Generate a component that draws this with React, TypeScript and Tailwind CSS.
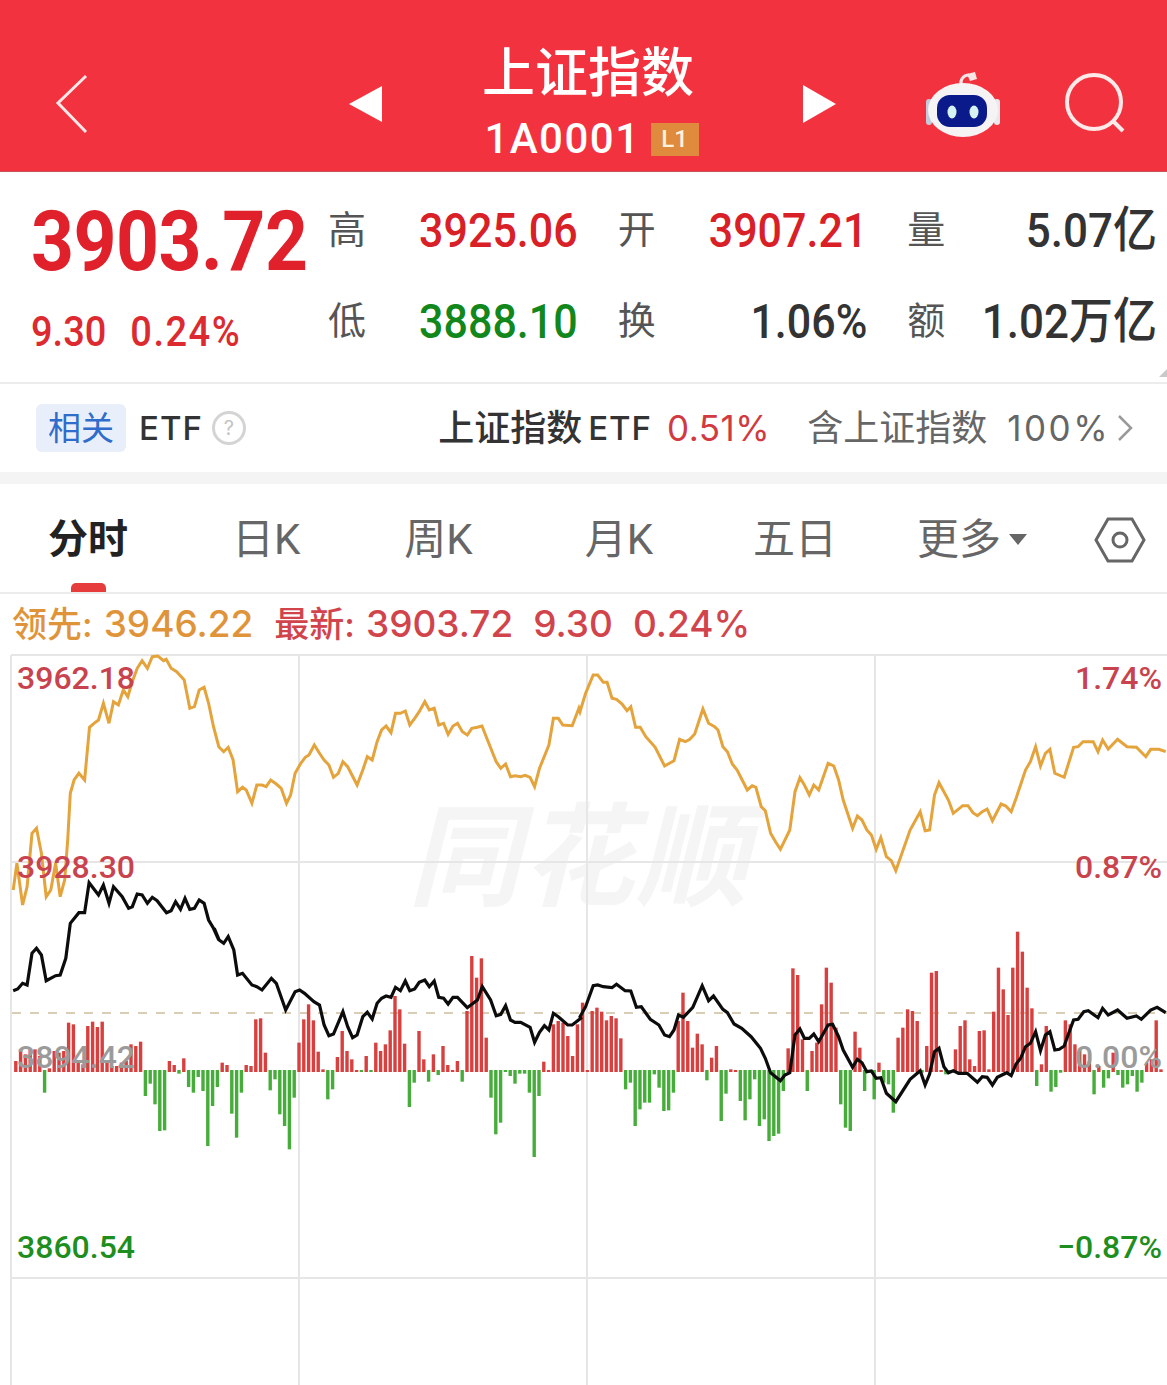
const orangeA = [35,750,45,670,60,795,72,740,85,580,97,565,110,640,123,770,135,750,148,670,160,770,172,720,180,600,187,460,197,420,210,400,225,420,238,262,250,250,262,240,275,190,290,250,302,185,315,195,328,150,340,170,352,125,365,85,378,62,392,85,405,50,420,48,435,62,442,58,455,85,470,95,490,120,505,205,517,200,530,150,543,142,555,190,568,260,582,320,595,335,607,322,620,360,632,455,645,442,655,450,670,490,683,435,697,435,708,440,720,420,735,432,748,445,762,490,773,465,785,400,800,370,812,352,822,345,836,315,850,340,862,360,875,375,887,412,900,400,912,365,925,380,950,435,965,390,977,350,990,360,1003,305,1015,270,1027,258,1040,278,1052,220,1065,220,1078,213,1090,255,1103,235,1115,215,1130,185,1142,210,1155,205,1167,255,1180,250,1192,283,1205,258,1217,250,1230,275,1243,285,1255,265,1270,262,1282,258,1295,295,1320,365,1332,385,1345,372,1358,410,1370,407,1385,410,1397,406,1410,412,1422,440,1435,385,1460,315,1472,235,1485,235,1497,255,1522,257,1540,205];
const orangeB = [0,215,15,160,35,105,47,105,62,127,72,127,85,175,97,178,112,192,125,212,135,200,148,262,160,262,175,290,200,322,225,378,250,362,265,298,280,305,292,298,305,282,327,207,342,250,358,260,367,270,380,320,392,335,405,372,418,390,445,450,458,437,468,442,482,500,493,512,507,580,520,605,533,628,558,570,572,455,585,413,597,435,610,465,622,435,635,450,660,370,675,378,688,420,700,480,725,565,738,528,750,540,763,570,775,585,788,628,800,593,815,650,828,662,840,692,878,570,905,515,918,572,930,570,943,465,955,428,980,480,993,520,1018,497,1032,497,1045,518,1057,527,1070,515,1083,507,1097,542,1120,492,1133,498,1147,515,1160,475,1185,390,1198,365,1212,320,1225,378,1238,340,1250,328,1263,400,1288,412,1313,322,1325,320,1338,305,1365,305,1378,335,1390,300,1405,327,1430,298,1455,320,1480,322,1505,350,1518,328,1540,328,1558,335];
const blackTop = [237,728,262,765,275,735,290,790,302,740,325,770,342,805,352,800,365,762,378,765,392,790,405,772,418,782,443,818,455,812,467,785,480,808,492,775,505,808,517,805,530,780,543,790,555,840,568,865,582,900];
const blackA1 = [35,212,47,207,60,190,72,195,85,100,97,85,110,105,123,182,148,167,160,165,175,115,187,10];
const blackA0 = [187,850,210,818,225,818];
const blackA2 = [570,25,583,60,595,70,607,50,622,90,632,165,645,160,670,195,683,200,697,210,722,175,735,190,760,270,785,215,797,210,810,220,835,245,850,255,862,315,875,347,887,342,912,275,925,320,938,353,950,345,965,290,977,277,990,297,1003,250,1015,235,1027,228,1040,232,1052,202,1065,212,1078,183,1090,212,1103,207,1115,187,1130,180,1142,200,1155,183,1167,232,1180,235,1192,252,1205,232,1217,232,1243,263,1270,240,1283,200,1305,240,1320,287,1332,283,1345,257,1358,300,1370,307,1385,307,1410,322,1422,367,1435,337,1448,317,1460,330,1472,280,1485,290,1510,315,1522,315,1545,295];
const blackB = [0,290,15,260,35,197,47,195,62,200,85,203,97,193,120,212,135,213,150,262,163,260,187,298,210,315,225,345,238,350,250,330,262,285,275,292,300,262,325,197,342,242,355,228,380,268,392,278,410,312,430,325,455,350,480,385,493,415,507,458,533,482,545,465,558,458,572,345,585,327,597,355,610,355,622,342,635,365,660,315,672,313,688,350,700,390,725,442,738,418,750,428,763,455,775,453,788,475,800,473,815,520,840,545,878,478,905,452,918,495,930,462,943,395,955,385,968,440,980,458,993,452,1007,460,1030,460,1057,487,1070,470,1083,472,1097,495,1110,472,1135,458,1147,467,1160,432,1172,415,1185,380,1198,370,1212,335,1225,392,1238,345,1250,335,1263,390,1275,388,1288,378,1300,340,1313,300,1325,298,1340,275,1352,272,1378,293,1390,265,1405,285,1430,270,1455,295,1480,288,1493,298,1518,270,1535,262,1558,278];

const barsA = [30,65,50,65,65,45,-65,8,60,55,60,145,140,25,20,135,148,132,148,30,15,15,25,30,80,75,88,-75,-38,-100,-180,-178,30,18,-8,38,-48,-65,-18,-60,-225,-105,-48,25,18,-128,-200,-65,18,15,155,158,55,-58,-25,-130,-165,-235,-80,85,155,200,152,58,5,-85,-55,42,120,60,35,3,-3,45,-3,85,60,80,122,225,185,82,-108,-35,120,35,-32,50,-12,75,18,3,30,-32,180,345,280,338,100,-80,-190,-155,-3,-15,-38,-8,-8,-65,-258,-75,28,3,140,150,145,105,45,140];
const barsB = [205,3,180,190,178,152,165,158,98,-55,-35,-165,-115,-95,-95,-10,-50,-120,-118,-65,150,235,150,70,112,80,-28,40,75,-150,-68,5,3,-90,-148,-85,-25,-165,-145,-210,-195,-188,-60,68,308,288,95,-60,60,85,200,310,265,130,-100,-170,-180,118,70,-60,-3,-85,25,-35,-40,-125,100,130,185,180,150,-5,75,295,300,3,-10,-3,65,135,152,35,15,120,122,5,178,310,245,168,310,418,358,250,188,-45,20,135,-62,-48,-5,152,140,80,65,50,30,-70,15,-50,-22,55,-12,-50,-40,-15,-62,-35,25,35,152,5];

// zoom crops were read at x*2.66 / y*3, so map those numbers back to page pixels
function toPage(arr: number[], x0: number, y0: number) {
  const out: string[] = [];
  for (let i = 0; i < arr.length; i += 2) {
    out.push(`${(x0 + arr[i] / 2.66).toFixed(1)},${(y0 + arr[i + 1] / 3).toFixed(1)}`);
  }
  return out;
}

const orangePts = [...toPage(orangeA, 0, 640), ...toPage(orangeB, 580, 640)].join(" ");
const blackPts = [
  ...toPage(blackA1, 0, 920),
  ...toPage(blackA0, 0, 640),
  ...toPage(blackTop, 0, 640),
  ...toPage(blackA2, 0, 920),
  ...toPage(blackB, 580, 920),
].join(" ");

const bars = [
  ...barsA.map((v, i) => ({ x: 15.8 + 4.8 * i, v })),
  ...barsB.map((v, i) => ({ x: 582.6 + 4.78 * i, v })),
];

function Quote({ label, value, color }: { label: string; value: string; color: string }) {
  return (
    <div className="flex items-center justify-between h-[91px]">
      <span className="text-[38px] text-[#555]">{label}</span>
      <span className={`font-medium scale-y-110 ${color}`}>{value}</span>
    </div>
  );
}

function Header() {
  return (
    <div className="flex items-center h-[172px] bg-[#f2323e] border-b border-[#c9525a] pl-[54px]">
      <svg width="36" height="60" viewBox="0 0 36 60" className="mt-[37px] shrink-0">
        <polyline points="32,2 4,29 32,58" fill="none" stroke="#fde7e7" strokeWidth="3" />
      </svg>
      <svg width="36" height="40" viewBox="0 0 36 40" className="ml-[258px] mt-[37px] shrink-0">
        <polygon points="1,20 34,2 34,38" fill="#fff" />
      </svg>
      <div className="w-[408px] shrink-0 self-start flex flex-col items-center text-white pt-[42px]">
        <div className="text-[53px] leading-[64px] font-medium">上证指数</div>
        <div className="flex items-center mt-[11px] gap-[10px] ml-[7px]">
          <span className="text-[42px] leading-[44px] tracking-[1.5px] font-medium">1A0001</span>
          <span className="w-[48px] h-[33px] bg-[#df8a3c] text-[#fff3dc] text-[24px] font-medium flex items-center justify-center">
            L1
          </span>
        </div>
      </div>
      <svg width="36" height="40" viewBox="0 0 36 40" className="ml-[9px] mt-[37px] shrink-0">
        <polygon points="35,20 2,1 2,39" fill="#fff" />
      </svg>
      <svg width="84" height="72" viewBox="922 68 84 72" className="ml-[85px] mt-[37px] shrink-0">
        <path d="M961 85c-1-6 3-10 8-10" fill="none" stroke="#f3e4e6" strokeWidth="3" />
        <polygon points="967,74 975,72 977,79 970,81" fill="#f7e6e6" />
        <rect x="926" y="99" width="6" height="26" rx="3" fill="#c3ccda" />
        <rect x="994" y="99" width="6" height="26" rx="3" fill="#e6e9ee" />
        <ellipse cx="963" cy="110" rx="35" ry="27" fill="#f6f3f5" />
        <rect x="937" y="95" width="50" height="32" rx="13" fill="#0a1a8a" />
        <ellipse cx="952" cy="112" rx="4.5" ry="6.5" fill="#d7f2f2" />
        <ellipse cx="974" cy="112" rx="4.5" ry="6.5" fill="#d7f2f2" />
      </svg>
      <svg width="64" height="66" viewBox="1063 72 64 66" className="ml-[57px] mt-[37px] shrink-0">
        <circle cx="1094" cy="103" r="27" fill="none" stroke="#ffe9e9" strokeWidth="4" />
        <line x1="1113" y1="122" x2="1123" y2="132" stroke="#ffe9e9" strokeWidth="4" />
      </svg>
    </div>
  );
}

function QuotePanel() {
  return (
    <div className="relative flex h-[212px] border-b-[2px] border-[#ececec]">
      <div className="w-[328px] shrink-0 pl-[31px] pt-[27px]">
        <div className="text-[75px] leading-[84px] font-bold text-[#e0202a] scale-y-110 origin-left whitespace-nowrap tracking-[-0.5px]">
          3903.72
        </div>
        <div className="flex gap-[24px] mt-[27px] text-[38px] leading-[44px] font-medium text-[#dc2a30] scale-y-110 origin-left">
          <span>9.30</span>
          <span className="tracking-[1.5px]">0.24%</span>
        </div>
      </div>
      <div className="grid grid-cols-3 gap-x-[40px] w-[829px] content-start pt-[12px]">
        <Quote label="高" value="3925.06" color="text-[43px] text-[#d92027]" />
        <Quote label="开" value="3907.21" color="text-[43px] text-[#d92027]" />
        <Quote label="量" value="5.07亿" color="text-[44px] text-[#333]" />
        <Quote label="低" value="3888.10" color="text-[43px] text-[#12871c]" />
        <Quote label="换" value="1.06%" color="text-[43px] text-[#333]" />
        <Quote label="额" value="1.02万亿" color="text-[44px] text-[#333]" />
      </div>
      <div className="absolute right-0 bottom-[5px] w-0 h-0 border-l-[8px] border-l-transparent border-b-[8px] border-b-[#c9c9c9]" />
    </div>
  );
}

function EtfRow() {
  return (
    <div className="flex items-center h-[88px] pl-[36px] pr-[34px] text-[36px] font-['Inter','Noto_Sans_CJK_SC',sans-serif] whitespace-nowrap">
      <span className="w-[90px] h-[48px] rounded-[6px] bg-[#e8effa] text-[#2f6ccb] text-[33px] flex items-center justify-center">
        相关
      </span>
      <span className="ml-[13px] font-medium text-[#333] text-[33px] tracking-[1px]">ETF</span>
      <span className="ml-[9px] w-[34px] h-[34px] rounded-full border-[3px] border-[#d4d4d4] text-[#c4c4c4] text-[20px] flex items-center justify-center">
        ?
      </span>
      <span className="ml-auto text-[#333] font-medium">上证指数</span>
      <span className="ml-[6px] text-[#333] font-medium text-[33px] tracking-[1px]">ETF</span>
      <span className="ml-[15px] text-[#d13a40] text-[35px] tracking-[0.5px]">0.51%</span>
      <span className="ml-[37px] text-[#666]">含上证指数</span>
      <span className="ml-[20px] text-[#666] text-[35px] tracking-[2.5px]">100%</span>
      <svg width="16" height="28" viewBox="0 0 16 28" className="ml-[7px]">
        <polyline points="2,2 14,14 2,26" fill="none" stroke="#999" strokeWidth="2.5" />
      </svg>
    </div>
  );
}

function Tabs() {
  return (
    <div className="flex items-center h-[110px] border-b-[2px] border-[#ececec] pl-[48px] pt-[4px] text-[42px] text-[#666]">
      <span className="relative text-[40px] font-bold text-[#222]">
        分时
        <span className="absolute left-[23px] bottom-[-33px] w-[35px] h-[9px] rounded-t-[5px] bg-[#e63c3c]" />
      </span>
      <span className="ml-[104px]">日K</span>
      <span className="ml-[104px]">周K</span>
      <span className="ml-[112px]">月K</span>
      <span className="ml-[100px]">五日</span>
      <span className="ml-[80px]">更多</span>
      <svg width="18" height="12" viewBox="0 0 18 12" className="ml-[8px]">
        <polygon points="0,0 18,0 9,11" fill="#666" />
      </svg>
      <svg width="52" height="46" viewBox="0 0 52 46" className="ml-[67px]">
        <polygon points="2,23 14,2 38,2 50,23 38,44 14,44" fill="none" stroke="#666" strokeWidth="3" />
        <circle cx="26" cy="23" r="7" fill="none" stroke="#666" strokeWidth="3" />
      </svg>
    </div>
  );
}

function Legend() {
  return (
    <div className="flex items-center h-[60px] pl-[12px] text-[37px] font-medium font-['Inter','Noto_Sans_CJK_SC',sans-serif] whitespace-nowrap">
      <span className="text-[35px] text-[#e0943a]">领先:</span>
      <span className="ml-[11px] text-[#e0943a]">3946.22</span>
      <span className="ml-[21px] text-[35px] text-[#d2444c]">最新:</span>
      <span className="ml-[11px] text-[#d2444c]">3903.72</span>
      <span className="ml-[20px] text-[#d2444c]">9.30</span>
      <span className="ml-[20px] text-[#d2444c]">0.24%</span>
    </div>
  );
}

function Chart() {
  return (
    <div className="relative h-[731px] overflow-hidden font-medium text-[32px]">
      <span className="absolute left-[408px] top-[140px] text-[112px] leading-[130px] font-bold italic text-[#f5f5f5] tracking-[2px] whitespace-nowrap">
        同花顺
      </span>
      <svg width="1167" height="731" viewBox="0 654 1167 731" className="absolute inset-0">
        <g stroke="#e6e6e6" strokeWidth="2">
          <line x1="11" y1="655" x2="1167" y2="655" />
          <line x1="11" y1="862" x2="1167" y2="862" />
          <line x1="11" y1="1278" x2="1167" y2="1278" />
          <line x1="11" y1="655" x2="11" y2="1385" />
          <line x1="299" y1="655" x2="299" y2="1385" />
          <line x1="587" y1="655" x2="587" y2="1385" />
          <line x1="875" y1="655" x2="875" y2="1385" />
        </g>
        <line x1="12" y1="1013" x2="1167" y2="1013" stroke="#cdbd9f" strokeWidth="1.5" strokeDasharray="9 9" />
        {bars.map((b, i) => (
          <rect
            key={i}
            x={b.x - 1.7}
            y={b.v > 0 ? 1071 - b.v / 3 : 1070}
            width="3.4"
            height={Math.abs(b.v) / 3 + 1}
            fill={b.v > 0 ? "#d8403f" : "#46ad3a"}
          />
        ))}
        <polyline points={orangePts} fill="none" stroke="#e5a33c" strokeWidth="3" />
        <polyline points={blackPts} fill="none" stroke="#0c0c0c" strokeWidth="3.2" />
      </svg>
      <span className="absolute left-[17px] top-[5px] text-[#c9434e]">3962.18</span>
      <span className="absolute left-[17px] top-[194px] text-[#c9434e]">3928.30</span>
      <span className="absolute left-[17px] top-[384px] text-[#9b9b9b]">3894.42</span>
      <span className="absolute left-[17px] top-[574px] text-[#1e8e1e]">3860.54</span>
      <span className="absolute right-[5px] top-[5px] text-[#c9434e]">1.74%</span>
      <span className="absolute right-[5px] top-[194px] text-[#c9434e]">0.87%</span>
      <span className="absolute right-[5px] top-[384px] text-[#9b9b9b]">0.00%</span>
      <span className="absolute right-[5px] top-[574px] text-[#1e8e1e]">−0.87%</span>
    </div>
  );
}

export default function App() {
  return (
    <div className="w-[1167px] h-[1385px] overflow-hidden bg-white text-[32px] leading-[38px] font-['Roboto','Noto_Sans_CJK_SC',sans-serif]">
      <Header />
      <QuotePanel />
      <EtfRow />
      <div className="h-[12px] bg-[#f4f4f4]" />
      <Tabs />
      <Legend />
      <Chart />
    </div>
  );
}
